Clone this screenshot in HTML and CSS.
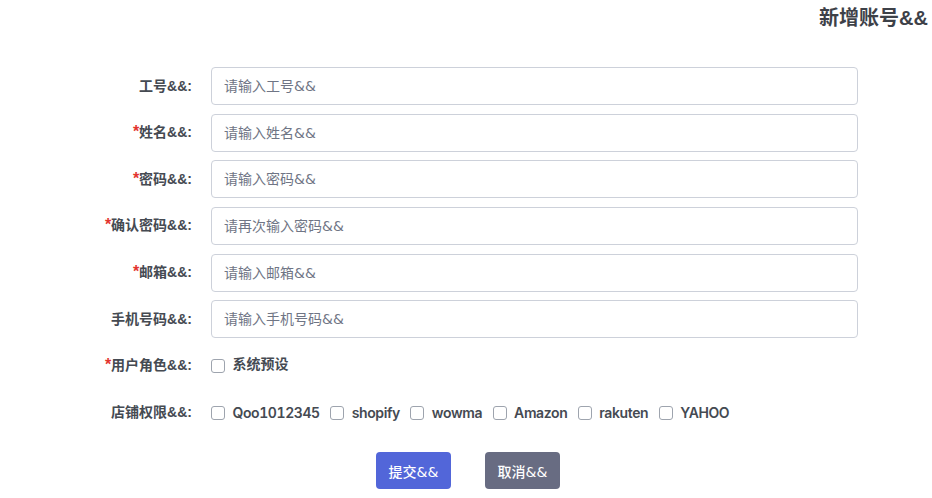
FILE: index.html
```html
<!DOCTYPE html>
<html lang="zh">
<head>
<meta charset="utf-8">
<link rel="stylesheet" href="styles.css">
</head>
<body>
<div class="page">
  <div class="header"><h1 class="title">新增账号&amp;&amp;</h1></div>
  <form class="form">
    <div class="row">
      <label class="label">工号&amp;&amp;:</label>
      <input class="input" type="text" placeholder="请输入工号&&">
    </div>
    <div class="row">
      <label class="label"><span class="req">*</span>姓名&amp;&amp;:</label>
      <input class="input" type="text" placeholder="请输入姓名&&">
    </div>
    <div class="row">
      <label class="label"><span class="req">*</span>密码&amp;&amp;:</label>
      <input class="input" type="text" placeholder="请输入密码&&">
    </div>
    <div class="row">
      <label class="label"><span class="req">*</span>确认密码&amp;&amp;:</label>
      <input class="input" type="text" placeholder="请再次输入密码&&">
    </div>
    <div class="row">
      <label class="label"><span class="req">*</span>邮箱&amp;&amp;:</label>
      <input class="input" type="text" placeholder="请输入邮箱&&">
    </div>
    <div class="row">
      <label class="label">手机号码&amp;&amp;:</label>
      <input class="input" type="text" placeholder="请输入手机号码&&">
    </div>
    <div class="row">
      <label class="label"><span class="req">*</span>用户角色&amp;&amp;:</label>
      <div class="checks">
        <label class="check cjk"><span class="box"></span>系统预设</label>
      </div>
    </div>
    <div class="row">
      <label class="label">店铺权限&amp;&amp;:</label>
      <div class="checks">
        <label class="check latin"><span class="box"></span>Qoo1012345</label>
        <label class="check latin"><span class="box"></span>shopify</label>
        <label class="check latin"><span class="box"></span>wowma</label>
        <label class="check latin"><span class="box"></span>Amazon</label>
        <label class="check latin"><span class="box"></span>rakuten</label>
        <label class="check latin"><span class="box"></span>YAHOO</label>
      </div>
    </div>
    <div class="actions">
      <button type="button" class="btn btn-primary">提交&amp;&amp;</button>
      <button type="button" class="btn btn-secondary">取消&amp;&amp;</button>
    </div>
  </form>
</div>
</body>
</html>
```

FILE: styles.css
```css
* { box-sizing: border-box; }
html, body { margin: 0; padding: 0; background: #fff; }
body {
  font-family: Inter, "Noto Sans CJK SC", sans-serif;
  font-size: 14px;
  color: #495057;
}
.page { width: 932px; }
.header {
  display: flex;
  justify-content: flex-end;
  padding: 5px 4px 0 0;
  height: 67px;
}
.title {
  margin: 0;
  font-family: "Liberation Sans", "Noto Sans CJK SC", sans-serif;
  font-size: 20px;
  font-weight: 700;
  line-height: 26px;
  color: #3d4148;
}
.form { display: flex; flex-direction: column; }
.row {
  display: flex;
  align-items: center;
  height: 38px;
  margin-bottom: 8.66px;
}
.label {
  width: 192px;
  text-align: right;
  font-family: "Liberation Sans", "Noto Sans CJK SC", sans-serif;
  font-weight: 700;
  line-height: 18px;
  color: #454a52;
  flex-shrink: 0;
  margin-right: 19px;
  padding-bottom: 1px;
}
.req { color: #e3342f; font-size: 16px; }
.input {
  width: 647px;
  height: 38px;
  border: 1px solid #cdd1da;
  border-radius: 4px;
  padding: 0 12px;
  font-family: "DejaVu Sans", "Noto Sans CJK SC", sans-serif;
  font-size: 14px;
  color: #495057;
  outline: none;
}
.input::placeholder { color: #6f7585; }
.checks { display: flex; align-items: center; gap: 10.5px; }
.check {
  display: flex;
  align-items: center;
  gap: 7.5px;
  font-weight: 600;
  line-height: 18px;
  color: #454a52;
}
.cjk { padding-bottom: 3px; }
.cjk .box { margin-top: 3px; }
.latin {
  letter-spacing: -0.4px;
  font-variant-numeric: tabular-nums;
}
.box {
  width: 14px;
  height: 14px;
  border: 1px solid #9ea4ae;
  border-radius: 3px;
  background: #fff;
}
.actions {
  display: flex;
  justify-content: center;
  gap: 34px;
  padding-left: 4px;
  margin-top: 12px;
}
.btn {
  width: 75px;
  height: 37px;
  border: none;
  border-radius: 4px;
  color: #fff;
  font-family: "DejaVu Sans", "Noto Sans CJK SC", sans-serif;
  font-size: 14px;
  font-weight: 500;
}
.btn-primary { background: #5266d9; }
.btn-secondary { background: #686c82; }
```
